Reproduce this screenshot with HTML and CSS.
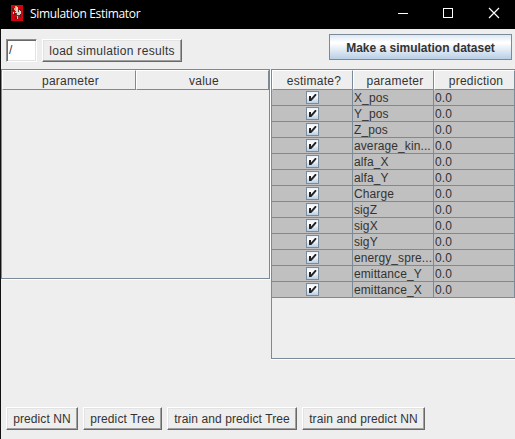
FILE: index.html
```html
<!DOCTYPE html>
<html lang="en">
<head>
<meta charset="utf-8">
<title>Simulation Estimator</title>
<link rel="stylesheet" href="styles.css">
</head>
<body>
<div class="window">
  <header class="titlebar">
    <svg class="logo" width="12" height="16" viewBox="0 0 12 16" shape-rendering="crispEdges"><path fill="#d2030f" d="M0 0h12v16H0z"/><path fill="#6c1715" d="M1 3h2v3H1zM3 8h2v2H3zM8 4h2v2H8zM4 12h2v2H4zM9 9h1v3H9z"/><path fill="#ef9b62" d="M4 1h2v2H4zM3 3h2v2H3z"/><path fill="#d8d2c8" d="M5 2h2v3H5zM4 5h5v3H4zM5 8h4v2H5zM2 7h1v2H2zM9 6h1v3H9zM6 11h1v3H6z"/><path fill="#59443e" d="M7 5h1v2H7zM5 8h1v2H5zM7 10h1v2H7zM4 6h1v1H4z"/></svg>
    <span class="title">Simulation Estimator</span>
    <svg class="controls" width="104" height="12" viewBox="0 0 104 12" fill="none" stroke="#fff"><path d="M0 6.5h10M45.5 1.5h9v9h-9z" shape-rendering="crispEdges"/><path d="M91 1l10 10M101 1L91 11" stroke-width="1.2"/></svg>
  </header>
  <div class="toolbar">
    <div class="field">/</div>
    <button class="btn load">load simulation results</button>
    <button class="primary">Make a simulation dataset</button>
  </div>
  <main class="panels">
    <section class="pane left">
      <div class="head"><span>parameter</span><span>value</span></div>
    </section>
    <section class="pane right">
      <div class="head"><span>estimate?</span><span>parameter</span><span>prediction</span></div>
      <div id="rows"></div>
    </section>
  </main>
  <footer class="actions">
    <button class="btn nn">predict NN</button>
    <button class="btn tree">predict Tree</button>
    <button class="btn train-tree">train and predict Tree</button>
    <button class="btn train-nn">train and predict NN</button>
  </footer>
</div>
<script src="script.js"></script>
</body>
</html>
```
FILE: styles.css
```css
* { box-sizing: border-box; }
body {
  margin: 0;
  width: 515px;
  height: 439px;
  overflow: hidden;
  background: #eee;
  font: 12px/16px "Liberation Sans", Arial, sans-serif;
  letter-spacing: 0.1px;
  color: #333;
}
.window { height: 439px; border-left: 1px solid #111; display: flex; flex-direction: column; }
.titlebar { height: 29px; flex: none; margin-left: -1px; background: #000; display: flex; align-items: flex-start; }
.logo { margin: 5px 0 0 11px; }
.title { margin: 5px 0 0 7px; color: #fff; font: 12px/17px "Open Sans", "Noto Sans", sans-serif; letter-spacing: -0.32px; }
.controls { margin: 7px 13px 0 auto; }
.toolbar { height: 40px; flex: none; display: flex; align-items: flex-start; padding: 5px 3px 0 5px; }
.field {
  width: 31px; height: 23px; margin-top: 5px; padding: 2px 2px;
  background: #fff; border: 1px solid; border-color: #8e8e8e #fff #fff #8e8e8e;
  box-shadow: inset 1px 1px #696969, inset -1px -1px #e3e3e3;
}
.btn {
  height: 23px; padding: 0; margin: 0; font: inherit; letter-spacing: inherit; color: inherit;
  background: #eee; border: 1px solid; border-color: #fff #696969 #696969 #fff;
  box-shadow: inset -1px -1px #a0a0a0, inset 1px 1px #e3e3e3;
  white-space: nowrap;
}
.load { width: 140px; margin: 5px 0 0 5px; letter-spacing: 0.3px; }
.primary {
  width: 183px; height: 26px; margin-left: auto; padding: 2px 0 0;
  border: 1px solid #7a8a99;
  background: linear-gradient(#dce8f3, #fff 30%, #fff 34%, #b8cfe5);
  font: bold 12px/16px "Liberation Sans", Arial, sans-serif; color: #333;
  white-space: nowrap;
}
.panels { display: flex; align-items: flex-start; height: 338px; flex: none; }
.pane { border: 1px solid #7a8a99; }
.left { width: 269px; height: 210px; box-shadow: 1px 1px #fff; margin-right: 1px; }
.right { width: 244px; height: 290px; box-shadow: 0 1px #fff; border-right: 0; }
.head { display: grid; height: 20px; grid-template-rows: 20px; text-align: center; line-height: 20px; letter-spacing: 0.25px; }
.left .head { grid-template-columns: 134px 133px; }
.right .head, .row { grid-template-columns: 80px 81px 81px; }
.head span { height: 20px; padding-left: 3px; border: 1px solid; border-color: #fff #7a8a99 #7a8a99 #fff; }
.right .head, .row { grid-template-columns: 81px 81px 81px; }
.row { display: grid; height: 16px; background: #c0c0c0; }
.row > * { border-right: 1px solid #7a8a99; border-bottom: 1px solid #7a8a99; padding-left: 1px; white-space: nowrap; overflow: hidden; line-height: 16px; }
.row > .cell-check { display: flex; justify-content: center; padding-top: 1px; }
.check { width: 13px; height: 13px; border: 1px solid #7a8a99; background: linear-gradient(#e8f0f7, #fff 35%, #b8cfe5); }
.check svg { display: block; }
.actions { display: flex; padding-left: 5px; }
.nn { width: 72px; margin-right: 5px; }
.tree { width: 79px; margin-right: 5px; }
.train-tree { width: 130px; margin-right: 5px; }
.train-nn { width: 123px; }
```
FILE: script.js
```js
const names = ["X_pos", "Y_pos", "Z_pos", "average_kin...", "alfa_X", "alfa_Y", "Charge", "sigZ", "sigX", "sigY", "energy_spre...", "emittance_Y", "emittance_X"];
document.getElementById("rows").innerHTML = names.map(name => `
  <div class="row">
    <div class="cell-check"><div class="check"><svg width="11" height="11" viewBox="0 0 11 11"><path fill="#222" d="M2 4h2v2.6L8 2h1.3v1.6L4.3 9H2z"/></svg></div></div>
    <div>${name}</div><div>0.0</div>
  </div>`).join("");
```
